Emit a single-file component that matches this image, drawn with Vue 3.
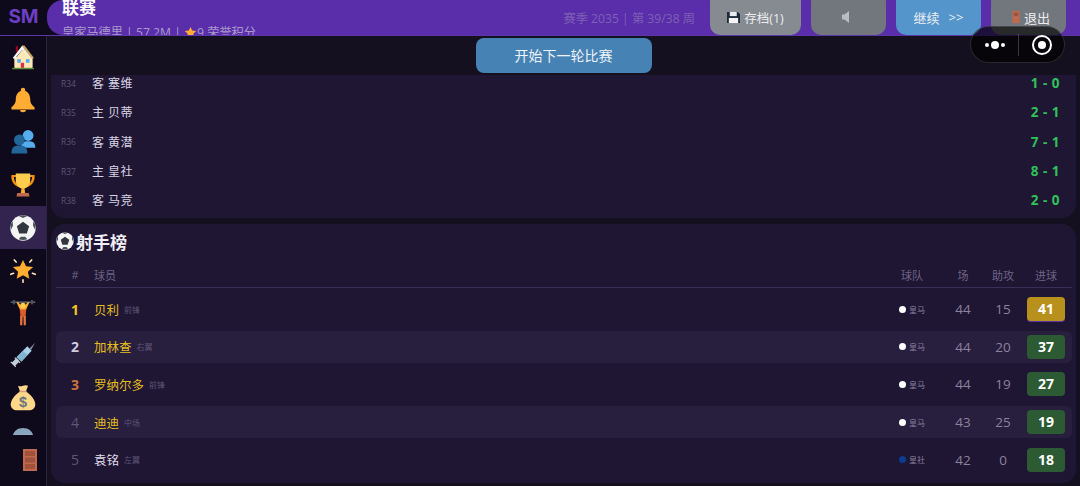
<template>
  <div class="app">
    <svg class="defs" width="0" height="0">
      <defs>
        <symbol id="ball" viewBox="0 0 36 36">
          <circle cx="18" cy="18" r="17.500" fill="#f4f4f4" />
          <path d="M18 9.500l8.500 6.200-3.200 10h-10.600l-3.200-10z" fill="#31373d" />
          <path d="M12 1.500c1.800-.6 4-1 6-1s4.200.4 6 1l-6 2.500zM1 14c.5-2 1.400-4 2.600-5.500l.6 6L1.500 20zM35 14c-.5-2-1.400-4-2.600-5.500l-.6 6 2.700 5.500zM12 33.500l3-3.500h6l3 3.500c-1.800.7-4 1-6 1s-4.200-.3-6-1z" fill="#4a5158" />
        </symbol>
        <symbol id="star" viewBox="0 0 36 36">
          <path d="M18 2.500l4.800 10.200 11.200 1.400-8.200 7.700 2.100 11.100L18 27.500 8.100 32.900l2.100-11.100L2 14.100l11.200-1.400z" fill="#ffac33" />
        </symbol>
      </defs>
    </svg>

    <header class="top">
      <div class="logo">SM</div>
      <div class="head-bar">
        <div class="head-text">
          <div class="head-title">联赛</div>
          <div class="head-sub">
            皇家马德里 | 57.2M |
            <svg class="sub-star"><use href="#star" /></svg>9 荣誉积分
          </div>
        </div>
        <div class="season">赛季 2035 | 第 39/38 周</div>
        <div class="head-btn save">
          <svg class="btn-icon" viewBox="0 0 14 14">
            <path d="M0 1h11.500L14 3.500V13H0z" fill="#1d2a3a" />
            <rect x="3" y="1" width="7.500" height="4.500" fill="#e8ecf0" />
            <rect x="2" y="7.500" width="10" height="5.500" fill="#f2f4f6" />
          </svg>
          存档(1)
        </div>
        <div class="head-btn back">
          <svg class="tri" viewBox="0 0 7 12">
            <path d="M7 0v12L2.500 8.500H0v-5h2.500z" fill="#b9bcc1" />
          </svg>
        </div>
        <div class="head-btn next">继续<span class="arrows">&gt;&gt;</span></div>
        <div class="head-btn quit">
          <svg class="door-small" viewBox="0 0 10 16">
            <rect x="1" y="1" width="8" height="14" fill="#c1694f" />
            <rect x="2.500" y="3" width="5" height="4" fill="#a0523c" />
          </svg>
          退出
        </div>
      </div>
    </header>

    <div class="body">
      <aside class="side">
        <nav class="side-list">
          <div v-for="(name, i) in sideIcons" :key="name" class="side-item" :class="{ active: i === 4 }">
            <svg v-if="name === 'house'" class="side-icon" viewBox="0 0 36 36">
              <rect x="8" y="3" width="3" height="8" fill="#a0041e" />
              <path d="M6 18h25v15H6z" fill="#ffe8b6" />
              <path d="M17 2L4 19l2 2L17 8l8 12h7z" fill="#f5f8fa" />
              <path d="M17 2h3l13 17-2 2L20 8z" fill="#c9a86a" />
              <path d="M17 8L7 21v12h24V21z" fill="#ffe8b6" />
              <rect x="10" y="21" width="5" height="5" fill="#55acee" />
              <rect x="22" y="21" width="5" height="5" fill="#55acee" />
              <rect x="15" y="26" width="4.500" height="7" fill="#dd2e44" />
              <rect x="3" y="33" width="30" height="2" fill="#5c913b" />
            </svg>
            <svg v-else-if="name === 'bell'" class="side-icon" viewBox="0 0 36 36">
              <path d="M18 1c-1.700 0-3 1.300-3 3v1.600C10 7 8 12.500 8 17c0 6-2.500 8-6 11v3h32v-3c-3.500-3-6-5-6-11 0-4.500-2-10-7-11.400V4c0-1.700-1.300-3-3-3z" fill="#ffac33" />
              <path d="M14 32a4 3 0 0 0 8 0z" fill="#ffac33" />
            </svg>
            <svg v-else-if="name === 'people'" class="side-icon" viewBox="0 0 36 36">
              <circle cx="25" cy="9" r="7.500" fill="#55acee" />
              <path d="M15 26c0-7 3-9 10-9s10 2 10 9z" fill="#55acee" />
              <circle cx="13" cy="15" r="7.500" fill="#269" />
              <path d="M2 34c0-9 4-11 11-11s11 2 11 11z" fill="#269" />
            </svg>
            <svg v-else-if="name === 'trophy'" class="side-icon" viewBox="0 0 36 36">
              <path d="M2 4h9v3H5.500c0 6 3 9 7.500 11l-1 3C5 18 1 12 2 4zM34 4h-9v3h5.500c0 6-3 9-7.500 11l1 3c7-3 11-9 10-17z" fill="#f4900c" />
              <path d="M8 2h20v10c0 6-5 10-8 11h-4c-3-1-8-5-8-11z" fill="#ffcc4d" />
              <path d="M16 22h4l1 7h-6z" fill="#ffac33" />
              <path d="M10 29h16l1 5H9z" fill="#c1694f" />
            </svg>
            <svg v-else-if="name === 'ball'" class="side-icon"><use href="#ball" /></svg>
            <svg v-else-if="name === 'glow'" class="side-icon" viewBox="0 0 36 36">
              <path d="M18 4l4.200 8.700 9.800 1.200-7.200 6.600 1.900 9.500L18 25.300l-8.700 4.700 1.900-9.500L4 13.900l9.800-1.200z" fill="#ffac33" />
              <path d="M18 31.500V35M6 4l2.500 3M30 4l-2.500 3M1 24l4-1.500M35 24l-4-1.500" stroke="#ffe8b6" stroke-width="2.200" stroke-linecap="round" />
            </svg>
            <svg v-else-if="name === 'lifter'" class="side-icon" viewBox="0 0 36 36">
              <path d="M1 3h34" stroke="#66757f" stroke-width="1.800" />
              <rect x="4" y="0" width="3" height="6" fill="#4a5158" />
              <rect x="29" y="0" width="3" height="6" fill="#4a5158" />
              <path d="M9 3l5 11h8l5-11h-2.800L20 9.500h-4L11.800 3z" fill="#ffac33" />
              <circle cx="18" cy="7.500" r="3.800" fill="#ffcc4d" />
              <path d="M13.500 13h9l-1 10h-7z" fill="#dd5a2b" />
              <path d="M14 22h3.500l-.5 13h-3zM18.500 22H22l0 13h-3z" fill="#e8743d" />
            </svg>
            <svg v-else-if="name === 'syringe'" class="side-icon" viewBox="0 0 36 36">
              <path d="M24 6l6 6-14 15-7-6z" fill="#a9d0e6" />
              <path d="M18 12l6 6-8 9-7-6z" fill="#7fb3d0" />
              <path d="M27 9L35 1l-6 10z" fill="#8899a6" />
              <path d="M11 24l-4-3-1 1 1.500 1.500L3 28l-1.500-1-1 1 7 7 1-1.200-1-1.300 4.500-4.500 1.500 1.500 1-1z" fill="#c3ced6" />
            </svg>
            <svg v-else-if="name === 'money'" class="side-icon" viewBox="0 0 36 36">
              <path d="M11 1c2.500 1.200 4.500 1 7 0s4.500-1 7 0l-3 8h-8z" fill="#fdd888" />
              <path d="M14 9h8c7 4 13 12 13 18 0 5-4 8-9 8H10c-5 0-9-3-9-8 0-6 6-14 13-18z" fill="#fdd888" />
              <rect x="13" y="8" width="10" height="2" fill="#d99e82" />
              <text x="18" y="30" text-anchor="middle" font-size="20" font-weight="700" fill="#67757f" font-family="Liberation Sans, sans-serif">$</text>
            </svg>
            <svg v-else class="side-icon" viewBox="0 0 36 36">
              <path d="M4 12C4 5 10 0 18 0s14 5 14 12z" fill="#88a5bd" />
              <path d="M4 9.500h28V12H4z" fill="#ccd6dd" />
            </svg>
          </div>
        </nav>
        <div class="side-foot">
          <svg class="door" viewBox="0 0 14 22">
            <rect width="14" height="22" fill="#c1694f" />
            <rect x="2" y="2" width="10" height="5" fill="#a0523c" />
            <rect x="2" y="8.500" width="10" height="5" fill="#a0523c" />
            <rect x="2" y="15" width="10" height="5" fill="#a0523c" />
          </svg>
        </div>
      </aside>

      <main class="main">
        <div class="action-bar">
          <div class="start-btn">开始下一轮比赛</div>
        </div>
        <div class="scroller">
          <section class="card results">
            <div v-for="m in matches" :key="m.round" class="match">
              <span class="round">{{ m.round }}</span>
              <span class="vs">{{ m.text }}</span>
              <span class="score">{{ m.score }}</span>
            </div>
          </section>

          <section class="card scorers">
            <h2 class="title"><svg class="title-ball"><use href="#ball" /></svg>射手榜</h2>
            <div class="row thead">
              <span class="c-rank">#</span>
              <span class="c-name">球员</span>
              <span class="c-team">球队</span>
              <span class="c-num">场</span>
              <span class="c-num">助攻</span>
              <span class="c-goal">进球</span>
            </div>
            <div v-for="(p, i) in players" :key="p.name" class="row player" :class="{ stripe: i % 2 === 1 }">
              <span class="c-rank rank" :class="'rank' + (i + 1)">{{ i + 1 }}</span>
              <span class="c-name">
                <span class="p-name" :class="{ gold: i < 4 }">{{ p.name }}</span>
                <span class="p-pos">{{ p.pos }}</span>
              </span>
              <span class="c-team t-cell">
                <i class="dot" :class="{ blue: p.team === '皇社' }"></i>{{ p.team }}
              </span>
              <span class="c-num">{{ p.apps }}</span>
              <span class="c-num">{{ p.assists }}</span>
              <span class="c-goal"><b class="goal" :class="{ top: i === 0 }">{{ p.goals }}</b></span>
            </div>
          </section>
        </div>
      </main>
    </div>

    <div class="capsule">
      <div class="cap-dots"><i></i><i class="mid"></i><i></i></div>
      <div class="cap-line"></div>
      <div class="cap-target"></div>
    </div>
  </div>
</template>

<script setup>
const sideIcons = ['house', 'bell', 'people', 'trophy', 'ball', 'glow', 'lifter', 'syringe', 'money', 'dome']

const matches = [
  { round: 'R34', text: '客 塞维', score: '1 - 0' },
  { round: 'R35', text: '主 贝蒂', score: '2 - 1' },
  { round: 'R36', text: '客 黄潜', score: '7 - 1' },
  { round: 'R37', text: '主 皇社', score: '8 - 1' },
  { round: 'R38', text: '客 马竞', score: '2 - 0' }
]

const players = [
  { name: '贝利', pos: '前锋', team: '皇马', apps: 44, assists: 15, goals: 41 },
  { name: '加林查', pos: '右翼', team: '皇马', apps: 44, assists: 20, goals: 37 },
  { name: '罗纳尔多', pos: '前锋', team: '皇马', apps: 44, assists: 19, goals: 27 },
  { name: '迪迪', pos: '中场', team: '皇马', apps: 43, assists: 25, goals: 19 },
  { name: '袁铭', pos: '左翼', team: '皇社', apps: 42, assists: 0, goals: 18 }
]
</script>

<style>
html,
body {
  margin: 0;
  background: #14101f;
}
</style>

<style scoped>
.app {
  position: relative;
  width: 1080px;
  height: 486px;
  overflow: hidden;
  background: #14101f;
  color: #e6e1f0;
  font-family: "Open Sans", "Noto Sans CJK SC", sans-serif;
}

.defs {
  position: absolute;
}

.top {
  display: flex;
  height: 35px;
  background: #0e0a1c;
  border-bottom: 1px solid #5a36a6;
}

.logo {
  width: 47px;
  text-align: center;
  line-height: 34px;
  font-family: "Inter", sans-serif;
  font-size: 19px;
  font-weight: 700;
  color: #6c3fc4;
}

.head-bar {
  flex: 1;
  display: flex;
  align-items: flex-end;
  overflow: hidden;
  padding: 0 14px 0 15px;
  background: #5a2dab;
  border-radius: 16px 0 0 16px;
}

.head-text {
  flex: 1;
  align-self: stretch;
  overflow: hidden;
}

.head-title {
  margin-top: -4px;
  font-size: 17px;
  line-height: 24px;
  font-weight: 700;
  color: #fff;
}

.head-sub {
  margin-top: 5px;
  font-size: 12.200px;
  line-height: 16px;
  color: #a99bc9;
  white-space: nowrap;
}

.sub-star {
  width: 13px;
  height: 13px;
  vertical-align: -2px;
}

.season {
  align-self: center;
  margin-right: 15px;
  font-size: 12.200px;
  color: #7d61b5;
}

.head-btn {
  display: flex;
  align-items: center;
  justify-content: center;
  gap: 3px;
  height: 43px;
  padding-top: 7px;
  box-sizing: border-box;
  border-radius: 10px;
  font-size: 13px;
  color: #eceef0;
  background: #868a91;
}

.save {
  width: 91px;
  gap: 4px;
  font-size: 12.500px;
}

.back {
  width: 75px;
  margin-left: 10px;
  background: #72767d;
}

.next {
  width: 85px;
  margin-left: 10px;
  background: #5495cc;
}

.arrows {
  margin-left: 6px;
}

.quit {
  width: 75px;
  margin-left: 10px;
  padding-left: 4px;
  background: #72767d;
}

.btn-icon {
  width: 13px;
  height: 13px;
}

.door-small {
  width: 10px;
  height: 14px;
}

.tri {
  width: 7px;
  height: 12px;
  margin-right: 7px;
}

.body {
  display: flex;
  height: 450px;
}

.side {
  display: flex;
  flex-direction: column;
  flex: none;
  width: 46px;
  background: #0e0a1c;
  border-right: 1px solid #2b2444;
}

.side-list {
  height: 399px;
  overflow: hidden;
}

.side-item {
  display: flex;
  align-items: center;
  justify-content: center;
  height: 42.600px;
}

.side-item.active {
  background: #33244f;
}

.side-icon {
  width: 26px;
  height: 26px;
}

.side-foot {
  padding: 14px 0 0 23px;
}

.door {
  display: block;
  width: 14px;
  height: 22px;
}

.main {
  flex: 1;
  min-width: 0;
}

.action-bar {
  display: flex;
  justify-content: center;
  height: 39px;
  padding-top: 2px;
  box-sizing: border-box;
}

.start-btn {
  width: 176px;
  height: 35px;
  line-height: 35px;
  text-align: center;
  font-size: 14px;
  color: #eef3f8;
  background: #4682b4;
  border-radius: 8px;
}

.scroller {
  height: 411px;
  overflow: hidden;
  padding: 0 4px;
}

.card {
  background: #1f1633;
  border-radius: 14px;
}

.results {
  height: 143px;
  padding: 0 16px 0 10px;
  border-radius: 0 0 14px 14px;
  overflow: hidden;
}

.match {
  position: relative;
  top: -6.500px;
  display: flex;
  align-items: center;
  height: 29.300px;
}

.round {
  width: 31px;
  font-size: 8.500px;
  color: #5d5475;
}

.vs {
  flex: 1;
  font-size: 12px;
  letter-spacing: 0.5px;
  color: #d8d3e4;
}

.score {
  font-size: 13.500px;
  font-weight: 700;
  letter-spacing: 0.5px;
  color: #2fc25a;
}

.scorers {
  margin-top: 6px;
  height: 259px;
  padding: 0 4px 0 5px;
}

.title {
  display: flex;
  align-items: center;
  gap: 2px;
  margin: 0;
  height: 34px;
  font-size: 17px;
  font-weight: 700;
  color: #f1eef6;
}

.title-ball {
  width: 18px;
  height: 18px;
}

.row {
  display: flex;
  align-items: center;
}

.thead {
  height: 30px;
  padding-top: 4px;
  box-sizing: border-box;
  margin-bottom: 5px;
  border-bottom: 1px solid #3a2f55;
  font-size: 11px;
  color: #6e6488;
}

.player {
  height: 32px;
  margin-bottom: 5.700px;
  border-radius: 6px;
}

.stripe {
  background: #281e3e;
}

.c-rank {
  width: 38px;
  text-align: center;
}

.c-name {
  flex: 1;
  display: flex;
  align-items: center;
}

.c-team {
  width: 46px;
  box-sizing: border-box;
  padding-left: 4px;
}

.c-num {
  width: 40px;
  text-align: center;
  font-size: 13.500px;
  color: #8b829f;
}

.thead .c-num {
  font-size: 11px;
  color: #6e6488;
}

.c-goal {
  display: flex;
  justify-content: center;
  width: 49px;
  padding: 0 7px 0 4px;
  box-sizing: border-box;
}

.rank {
  font-size: 14px;
  font-weight: 700;
}

.rank1 {
  color: #f2c81e;
}

.rank2 {
  color: #cfcbe0;
}

.rank3 {
  color: #c9743c;
}

.rank4,
.rank5 {
  font-weight: 400;
  color: #5f5678;
}

.p-name {
  font-size: 12.500px;
  color: #e0dceb;
}

.p-name.gold {
  color: #e6bf1f;
}

.p-pos {
  margin-left: 5px;
  font-size: 8px;
  color: #5d5475;
}

.t-cell {
  display: flex;
  align-items: center;
  padding-left: 2px;
  font-size: 8px;
  color: #8b829f;
}

.dot {
  width: 7px;
  height: 7px;
  margin-right: 3px;
  border-radius: 50%;
  background: #fff;
}

.dot.blue {
  background: #0a3d91;
}

.goal {
  display: block;
  flex: none;
  width: 38px;
  height: 24px;
  line-height: 24px;
  border-radius: 4px;
  text-align: center;
  font-size: 14px;
  font-weight: 700;
  color: #fff;
  background: #2c5a33;
}

.goal.top {
  background: #b8901c;
}

.capsule {
  position: absolute;
  top: 26px;
  left: 970px;
  display: flex;
  align-items: center;
  width: 95px;
  height: 37px;
  box-sizing: border-box;
  background: rgba(0, 0, 0, 0.65);
  border: 1px solid rgba(255, 255, 255, 0.14);
  border-radius: 19px;
}

.cap-dots {
  display: flex;
  flex: none;
  align-items: center;
  justify-content: center;
  gap: 2px;
  width: 47px;
}

.cap-dots i {
  width: 4px;
  height: 4px;
  border-radius: 50%;
  background: #fff;
}

.cap-dots .mid {
  width: 8px;
  height: 8px;
}

.cap-line {
  flex: none;
  width: 1px;
  height: 22px;
  background: rgba(255, 255, 255, 0.2);
}

.cap-target {
  position: relative;
  flex: none;
  width: 20px;
  height: 20px;
  margin-left: 13px;
  box-sizing: border-box;
  border: 2px solid #fff;
  border-radius: 50%;
}

.cap-target::after {
  content: "";
  position: absolute;
  top: 4px;
  left: 4px;
  width: 8px;
  height: 8px;
  border-radius: 50%;
  background: #fff;
}
</style>
